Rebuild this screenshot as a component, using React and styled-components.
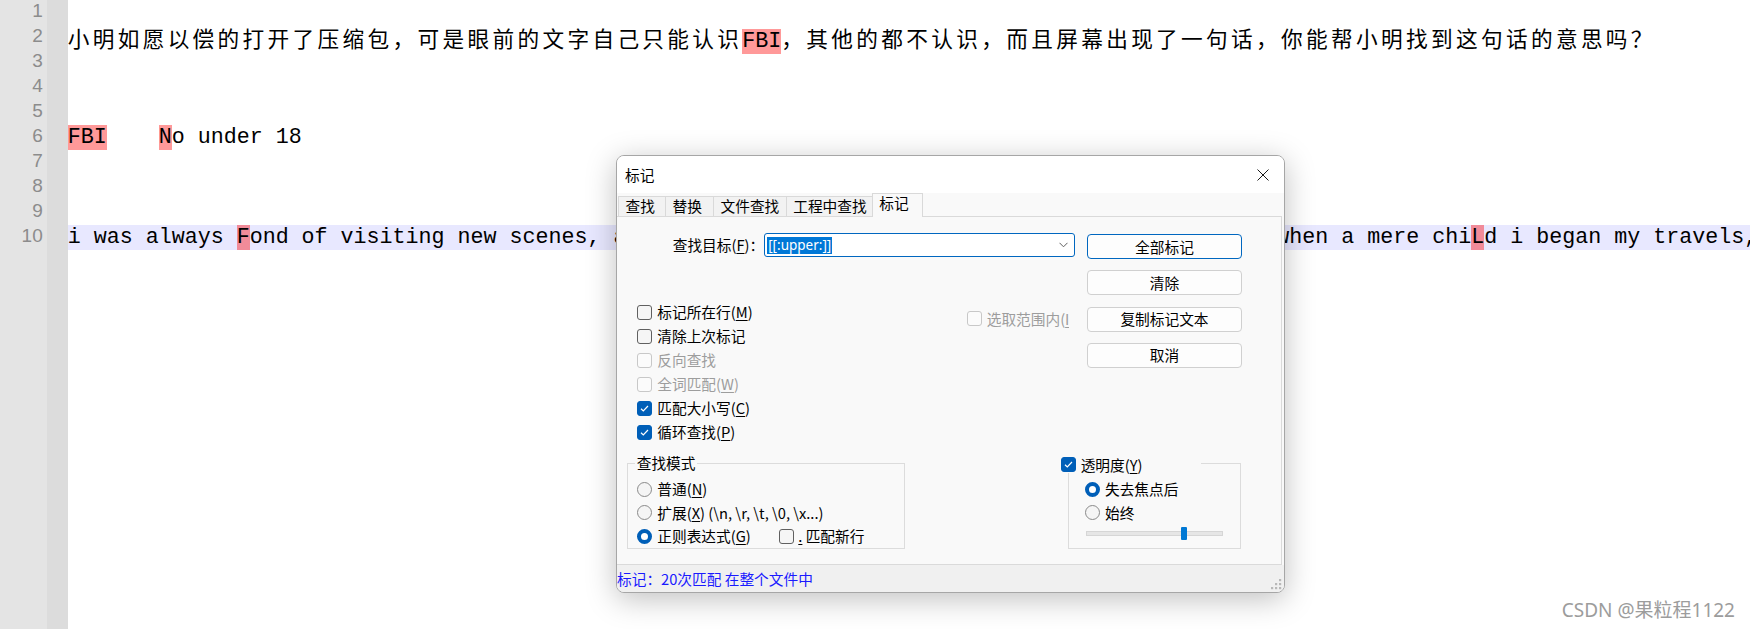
import React from "react";
import styled, { createGlobalStyle } from "styled-components";

const GlobalStyle = createGlobalStyle`
  html, body { margin: 0; padding: 0; background: #fff; overflow: hidden; }
  #root { width: 1750px; height: 629px; }
`;

const UI = `"Noto Sans CJK SC", "Noto Sans", sans-serif`;

/* ---------- editor ---------- */
const Editor = styled.div`
  position: relative;
  width: 1750px;
  height: 629px;
  overflow: hidden;
  display: flex;
  background: #fff;
`;
const Gutter = styled.div`
  flex: 0 0 47px;
  background: #e4e4e4;
  display: flex;
  flex-direction: column;
`;
const LineNo = styled.div`
  height: 25px;
  line-height: 25px;
  text-align: right;
  padding-right: 4.3px;
  font: 19px "Liberation Sans", Arial, sans-serif;
  color: #8c8c8c;
`;
const FoldMargin = styled.div`
  flex: 0 0 20.7px;
  background: #dcdcdc;
`;
const TextArea = styled.div`
  flex: 1;
  min-width: 0;
  overflow: hidden;
  display: flex;
  flex-direction: column;
`;
const Line = styled.div`
  flex: none;
  height: 25px;
  min-height: 0;
  line-height: 25px;
  white-space: pre;
  font-family: "Liberation Mono", "Noto Sans CJK SC", monospace;
  font-size: 21.67px;
  color: #000;
  background: ${(p) => (p.$current ? "#e8e8ff" : "transparent")};
`;
const Cjk = styled.span`
  font-family: "Noto Sans CJK SC", sans-serif;
  letter-spacing: 3.33px;
  line-height: 25px;
`;
const Mark = styled.span`
  background: rgba(255, 0, 0, 0.4);
`;

/* ---------- dialog ---------- */
const Dialog = styled.div`
  position: absolute;
  left: 616px;
  top: 155px;
  width: 669px;
  height: 438px;
  box-sizing: border-box;
  border: 1px solid #a6a6a6;
  border-radius: 8px;
  background: #f9f9f9;
  overflow: hidden;
  box-shadow: 0 6px 30px rgba(0, 0, 0, 0.25);
  display: flex;
  flex-direction: column;
  font-family: ${UI};
  font-size: 14.7px;
  color: #000;
`;
const TitleBar = styled.div`
  flex: 0 0 37px;
  background: #fff;
  display: flex;
  align-items: center;
  padding-left: 8px;
`;
const Title = styled.span`
  line-height: 20px;
  margin-top: 1px;
`;
const CloseButton = styled.div`
  margin-left: auto;
  width: 42px;
  height: 100%;
  display: flex;
  align-items: center;
  justify-content: center;
`;
const TabStrip = styled.div`
  flex: 0 0 23px;
  display: flex;
  align-items: flex-end;
  padding-left: 1px;
  position: relative;
  z-index: 1;
`;
const Tab = styled.div`
  box-sizing: border-box;
  width: ${(p) => p.$w}px;
  height: ${(p) => (p.$active ? 24 : 20)}px;
  margin-bottom: ${(p) => (p.$active ? -1 : 0)}px;
  border: 1px solid #d9d9d9;
  border-bottom: none;
  border-right: ${(p) => (p.$active ? "1px solid #d9d9d9" : "none")};
  background: ${(p) => (p.$active ? "#f9f9f9" : "#f2f2f2")};
  padding-left: 6.5px;
  line-height: 17px;
  white-space: nowrap;
`;
const Panel = styled.div`
  flex: 1;
  min-height: 0;
  box-sizing: border-box;
  border: 1px solid #dadada;
  border-left: none;
  margin-right: 2px;
  background: #f9f9f9;
  display: flex;
  flex-direction: column;
`;
const Upper = styled.div`
  display: grid;
  grid-template-columns: 469.7px 155.6px;
  padding-top: 16.3px;
`;
const LeftCol = styled.div`
  display: flex;
  flex-direction: column;
`;
const FindRow = styled.div`
  display: flex;
  align-items: center;
  height: 24px;
  padding-left: 55.7px;
`;
const FindLabel = styled.span`
  flex: 0 0 89px;
  white-space: nowrap;
  line-height: 20px;
`;
const Combo = styled.div`
  flex: 0 0 311px;
  height: 24px;
  box-sizing: border-box;
  border: 1px solid #0067c0;
  border-radius: 3px;
  background: #fff;
  display: flex;
  align-items: center;
  padding: 0 6px 0 2px;
`;
const Selected = styled.span`
  background: #0078d7;
  color: #fff;
  font-family: "Noto Sans", sans-serif;
  font-size: 13.5px;
  line-height: 17px;
  padding: 0 1px;
`;
const Chevron = styled.svg`
  margin-left: auto;
`;
const OptionsRow = styled.div`
  display: grid;
  grid-template-columns: 329.4px 1fr;
  margin-top: 43px;
  padding-left: 20.3px;
`;
const CheckList = styled.div`
  display: flex;
  flex-direction: column;
`;
const Option = styled.label`
  display: flex;
  align-items: center;
  gap: ${(p) => p.$gap ?? 5}px;
  height: ${(p) => p.$h ?? 24}px;
  white-space: nowrap;
  color: ${(p) => (p.$disabled ? "#9d9d9d" : "#000")};
  line-height: 20px;
`;
const ClipOption = styled(Option)`
  margin-top: 6.7px;
  width: 102.6px;
  overflow: hidden;
`;
const U = styled.span`
  text-decoration: underline;
  text-underline-offset: 2px;
`;
const Box = styled.span`
  flex: none;
  width: 15px;
  height: 15px;
  box-sizing: border-box;
  border-radius: 3px;
  border: 1px solid
    ${(p) => (p.$checked ? "#005fb8" : p.$disabled ? "#c8c8c8" : "#606060")};
  background: ${(p) =>
    p.$checked ? "#005fb8" : p.$disabled ? "#fbfbfb" : "#f5f5f5"};
  display: inline-flex;
  align-items: center;
  justify-content: center;
`;
const RadioDot = styled.span`
  flex: none;
  width: 15px;
  height: 15px;
  box-sizing: border-box;
  border-radius: 50%;
  border: ${(p) => (p.$checked ? "4.5px solid #005fb8" : "1px solid #8a8a8a")};
  background: ${(p) => (p.$checked ? "#fff" : "#f5f5f5")};
`;
const ButtonCol = styled.div`
  display: flex;
  flex-direction: column;
  gap: 11.2px;
  margin-top: 1px;
`;
const Button = styled.div`
  height: 25px;
  box-sizing: border-box;
  border: 1px solid ${(p) => (p.$default ? "#0067c0" : "#d0d0d0")};
  border-radius: 4px;
  background: #fdfdfd;
  display: flex;
  align-items: center;
  justify-content: center;
  line-height: 20px;
`;
const Lower = styled.div`
  display: flex;
  align-items: flex-start;
  margin-top: 9px;
  padding-left: 10.3px;
`;
const Group = styled.fieldset`
  margin: 0 0 0 ${(p) => p.$ml ?? 0}px;
  padding: 4px 9px 0 ${(p) => p.$pl ?? 9}px;
  border: 1px solid #dcdcdc;
  box-sizing: border-box;
  width: ${(p) => p.$w}px;
  height: ${(p) => p.$h}px;
  min-width: 0;
  display: flex;
  flex-direction: column;
`;
const Legend = styled.legend`
  padding: 0 2px;
  margin-left: -2.6px;
  line-height: 20px;
  height: 20px;
  white-space: nowrap;
`;
const CheckLegend = styled.legend`
  padding: 0;
  margin-left: -24px;
  width: 140px;
  height: 20px;
`;
const LegendInner = styled.span`
  display: inline-flex;
  align-items: center;
  gap: 4.7px;
  height: 20px;
  line-height: 20px;
  white-space: nowrap;
`;
const RegexRow = styled.div`
  display: grid;
  grid-template-columns: 142px auto;
  align-items: center;
  height: 23.7px;
`;
const SliderRow = styled.div`
  height: 17px;
  display: flex;
  align-items: center;
  padding-left: 1px;
`;
const Track = styled.div`
  position: relative;
  width: 136.7px;
  height: 5px;
  box-sizing: border-box;
  border: 1px solid #d6d6d6;
  background: #e6e6e6;
`;
const Thumb = styled.div`
  position: absolute;
  left: ${(p) => p.$pos}px;
  top: 50%;
  width: 6px;
  height: 13.3px;
  margin-top: -6.65px;
  background: #0078d4;
  border-radius: 1px;
`;
const StatusBar = styled.div`
  flex: 0 0 27px;
  background: #f0f0f0;
  display: flex;
  align-items: center;
  color: #1a1aff;
  line-height: 20px;
`;
const Grip = styled.svg`
  align-self: flex-end;
  margin: 0 2px 2px auto;
`;
const Watermark = styled.div`
  position: absolute;
  right: 15px;
  bottom: 9px;
  font: 19px "Noto Sans", "Noto Sans CJK SC", sans-serif;
  line-height: 19px;
  color: #9c9c9c;
`;

const Check = () => (
  <svg width="11" height="11" viewBox="0 0 11 11">
    <path d="M2 5.8 L4.3 8 L9 3" fill="none" stroke="#fff" strokeWidth="1.2" />
  </svg>
);

const CheckOpt = ({ checked, disabled, children, ...rest }) => (
  <Option $disabled={disabled} {...rest}>
    <Box $checked={checked} $disabled={disabled}>
      {checked && <Check />}
    </Box>
    <span>{children}</span>
  </Option>
);

const RadioOpt = ({ checked, children }) => (
  <Option $h={23.7}>
    <RadioDot $checked={checked} />
    <span>{children}</span>
  </Option>
);

const tabs = [
  ["查找", 47],
  ["替换", 48],
  ["文件查找", 72.7],
  ["工程中查找", 86],
  ["标记", 51, true],
];

export default function App() {
  const lines = [
    null,
    <>
      <Cjk>小明如愿以偿的打开了压缩包，可是眼前的文字自己只能认识</Cjk>
      <Mark>FBI</Mark>
      <Cjk>，其他的都不认识，而且屏幕出现了一句话，你能帮小明找到这句话的意思吗？</Cjk>
    </>,
    null,
    null,
    null,
    <>
      <Mark>FBI</Mark>
      {"    "}
      <Mark>N</Mark>o under 18
    </>,
    null,
    null,
    null,
    <>
      {"i was always "}
      <Mark>F</Mark>
      {"ond of visiting new scenes, and observing strange characters and manners. even when a mere chi"}
      <Mark>L</Mark>
      {"d i began my travels,"}
    </>,
  ];

  return (
    <>
      <GlobalStyle />
      <Editor>
        <Gutter>
          {lines.map((_, i) => (
            <LineNo key={i}>{i + 1}</LineNo>
          ))}
        </Gutter>
        <FoldMargin />
        <TextArea>
          {lines.map((l, i) => (
            <Line key={i} $current={i === 9}>
              {l}
            </Line>
          ))}
        </TextArea>

        <Dialog>
          <TitleBar>
            <Title>标记</Title>
            <CloseButton>
              <svg width="12" height="12" viewBox="0 0 12 12">
                <path d="M0.5 0.5 L11.5 11.5 M11.5 0.5 L0.5 11.5" stroke="#1a1a1a" strokeWidth="1" />
              </svg>
            </CloseButton>
          </TitleBar>
          <TabStrip>
            {tabs.map(([t, w, a]) => (
              <Tab key={t} $w={w} $active={a}>
                {t}
              </Tab>
            ))}
          </TabStrip>
          <Panel>
            <Upper>
              <LeftCol>
                <FindRow>
                  <FindLabel>
                    查找目标(<U>F</U>)：
                  </FindLabel>
                  <Combo>
                    <Selected>[[:upper:]]</Selected>
                    <Chevron width="9" height="6" viewBox="0 0 9 6">
                      <path d="M0.5 0.8 L4.5 4.8 L8.5 0.8" fill="none" stroke="#606060" strokeWidth="1" />
                    </Chevron>
                  </Combo>
                </FindRow>
                <OptionsRow>
                  <CheckList>
                    <CheckOpt>
                      标记所在行(<U>M</U>)
                    </CheckOpt>
                    <CheckOpt>清除上次标记</CheckOpt>
                    <CheckOpt disabled>反向查找</CheckOpt>
                    <CheckOpt disabled>
                      全词匹配(<U>W</U>)
                    </CheckOpt>
                    <CheckOpt checked>
                      匹配大小写(<U>C</U>)
                    </CheckOpt>
                    <CheckOpt checked>
                      循环查找(<U>P</U>)
                    </CheckOpt>
                  </CheckList>
                  <ClipOption $disabled>
                    <Box $disabled />
                    <span>
                      选取范围内(<U>I</U>)
                    </span>
                  </ClipOption>
                </OptionsRow>
              </LeftCol>
              <ButtonCol>
                <Button $default>全部标记</Button>
                <Button>清除</Button>
                <Button>复制标记文本</Button>
                <Button>取消</Button>
              </ButtonCol>
            </Upper>
            <Lower>
              <Group $w={277.4} $h={95.7}>
                <Legend>查找模式</Legend>
                <RadioOpt>
                  普通(<U>N</U>)
                </RadioOpt>
                <RadioOpt>
                  扩展(<U>X</U>) (\n, \r, \t, \0, \x...)
                </RadioOpt>
                <RegexRow>
                  <RadioOpt checked>
                    正则表达式(<U>G</U>)
                  </RadioOpt>
                  <Option $gap={4}>
                    <Box />
                    <span>
                      <U>.</U> 匹配新行
                    </span>
                  </Option>
                </RegexRow>
              </Group>
              <Group $w={172.4} $h={96} $ml={163.6} $pl={15.7}>
                <CheckLegend>
                  <LegendInner>
                    <Box $checked>
                      <Check />
                    </Box>
                    <span>
                      透明度(<U>Y</U>)
                    </span>
                  </LegendInner>
                </CheckLegend>
                <RadioOpt checked>失去焦点后</RadioOpt>
                <RadioOpt>始终</RadioOpt>
                <SliderRow>
                  <Track>
                    <Thumb $pos={94} />
                  </Track>
                </SliderRow>
              </Group>
            </Lower>
          </Panel>
          <StatusBar>
            <span>标记：20次匹配 在整个文件中</span>
            <Grip width="11" height="11" viewBox="0 0 11 11">
              {[
                [8, 0],
                [8, 4],
                [4, 4],
                [8, 8],
                [4, 8],
                [0, 8],
              ].map(([x, y]) => (
                <rect key={`${x}-${y}`} x={x} y={y} width="2.2" height="2.2" fill="#b8b8b8" />
              ))}
            </Grip>
          </StatusBar>
        </Dialog>

        <Watermark>CSDN @果粒程1122</Watermark>
      </Editor>
    </>
  );
}
